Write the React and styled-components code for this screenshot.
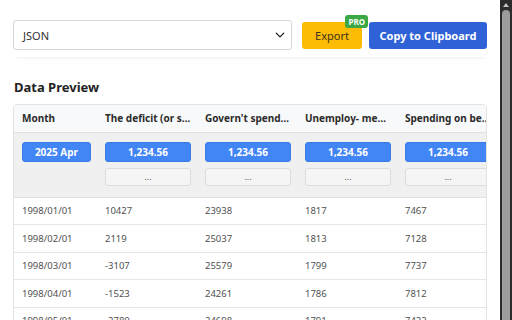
import React from 'react';
import styled, { createGlobalStyle } from 'styled-components';

const GlobalStyle = createGlobalStyle`
  html, body {
    margin: 0;
    padding: 0;
    background: #ffffff;
  }
  body {
    font-family: "Noto Sans", "Open Sans", Arial, sans-serif;
    color: #333;
  }
`;

const Page = styled.div`
  width: 512px;
  height: 320px;
  display: flex;
  overflow: hidden;
`;

const Main = styled.div`
  flex: 1;
  min-width: 0;
  padding: 13px 13px 0 13px;
  overflow: hidden;
`;

// fake window scrollbar on the right edge
const ScrollTrack = styled.div`
  width: 12px;
  flex-shrink: 0;
  background: #2c2c2c;
  display: flex;
  flex-direction: column;
  align-items: center;
  padding-top: 3px;
  box-sizing: border-box;
`;

const ScrollArrow = styled.div`
  width: 0;
  height: 0;
  border-left: 3.5px solid transparent;
  border-right: 3.5px solid transparent;
  border-bottom: 4px solid #c4c4c4;
`;

const ScrollThumb = styled.div`
  flex: 1;
  width: 8px;
  margin-top: 3px;
  background: #9c9c9c;
  border-radius: 4px 4px 0 0;
`;

const Toolbar = styled.div`
  display: flex;
  align-items: center;
  gap: 7px;
  padding: 7px 0 7px 0;
  box-shadow: 0 3px 3px -2px rgba(0, 0, 0, 0.07);
`;

const Select = styled.div`
  flex: 1;
  height: 30px;
  margin-right: 3px;
  box-sizing: border-box;
  border: 1px solid #d6d6d6;
  border-radius: 3px;
  display: flex;
  align-items: center;
  justify-content: space-between;
  padding: 0 6px 0 9px;
  font-size: 11px;
  color: #333;
`;

const ButtonWrap = styled.div`
  position: relative;
  display: flex;
`;

const Button = styled.button`
  height: 27px;
  border: none;
  border-radius: 3px;
  font-family: inherit;
  font-size: 11px;
  font-weight: ${p => (p.$primary ? 700 : 400)};
  color: ${p => (p.$primary ? '#ffffff' : '#3a3020')};
  background: ${p => (p.$primary ? '#2f62d6' : '#fcbb04')};
  padding: 0;
  width: ${p => p.$w}px;
  white-space: nowrap;
  cursor: pointer;
`;

const Badge = styled.span`
  position: absolute;
  top: -7px;
  right: -6px;
  background: #3aa845;
  color: #fff;
  font-size: 8px;
  font-weight: 700;
  line-height: 13px;
  padding: 0 3px;
  border-radius: 3px;
`;

const Heading = styled.h3`
  margin: 21px 0 0 1px;
  font-size: 13px;
  font-weight: 700;
  color: #222;
  line-height: 18px;
`;

const Card = styled.div`
  margin-top: 8px;
  border: 1px solid #e3e3e3;
  border-radius: 4px;
  overflow: hidden;
`;

const Table = styled.table`
  border-collapse: collapse;
  table-layout: fixed;
  width: 483px;
`;

const HeadCell = styled.th`
  width: ${p => p.$w}px;
  text-align: left;
  font-size: 10px;
  font-weight: 700;
  color: #2b2b2b;
  background: #f8f9fa;
  height: 27px;
  padding: 0 6px 0 8px;
  box-sizing: border-box;
  white-space: nowrap;
  overflow: hidden;
  text-overflow: ellipsis;
  border-bottom: 1px solid #e2e2e2;
`;

const FilterCell = styled.td`
  background: #f0f0f0;
  padding: 9px 6px 11px 8px;
  vertical-align: top;
  border-bottom: 1px solid #e2e2e2;
`;

const Stack = styled.div`
  display: flex;
  flex-direction: column;
  gap: 6px;
`;

const Pill = styled.div`
  height: 20px;
  box-sizing: border-box;
  background: #4285f4;
  border: 1px solid #3a7be6;
  border-radius: 3px;
  color: #fff;
  font-size: 10px;
  font-weight: 700;
  display: flex;
  align-items: center;
  justify-content: center;
  white-space: nowrap;
`;

const More = styled.div`
  height: 18px;
  box-sizing: border-box;
  background: #f5f5f5;
  border: 1px solid #dcdcdc;
  border-radius: 3px;
  color: #555;
  font-size: 9px;
  display: flex;
  align-items: center;
  justify-content: center;
`;

const Cell = styled.td`
  height: 27.5px;
  box-sizing: border-box;
  padding: 0 8px;
  font-size: 9.5px;
  color: #505050;
  border-bottom: 1px solid #e6e6e6;
  white-space: nowrap;
`;

const Chevron = () => (
  <svg width="10" height="10" viewBox="0 0 16 16">
    <path d="M2 5l6 6 6-6" fill="none" stroke="#222" strokeWidth="2.2" strokeLinecap="round" strokeLinejoin="round" />
  </svg>
);

const columns = [
  { label: 'Month', w: 83, value: '2025 Apr', more: false },
  { label: 'The deficit (or surplus)', w: 100, value: '1,234.56', more: true },
  { label: "Govern't spending", w: 100, value: '1,234.56', more: true },
  { label: 'Unemploy- ment rate', w: 100, value: '1,234.56', more: true },
  { label: 'Spending on benefits', w: 100, value: '1,234.56', more: true },
];

const rows = [
  ['1998/01/01', '10427', '23938', '1817', '7467'],
  ['1998/02/01', '2119', '25037', '1813', '7128'],
  ['1998/03/01', '-3107', '25579', '1799', '7737'],
  ['1998/04/01', '-1523', '24261', '1786', '7812'],
  ['1998/05/01', '-2780', '24698', '1791', '7422'],
];

const App = () => {
  return (
    <>
      <GlobalStyle />
      <Page>
        <Main>
          <Toolbar>
            <Select>
              <span>JSON</span>
              <Chevron />
            </Select>
            <ButtonWrap>
              <Button $w={60}>Export</Button>
              <Badge>PRO</Badge>
            </ButtonWrap>
            <Button $primary $w={118}>Copy to Clipboard</Button>
          </Toolbar>

          <Heading>Data Preview</Heading>

          <Card>
            <Table>
              <thead>
                <tr>
                  {columns.map(c => (
                    <HeadCell key={c.label} $w={c.w}>{c.label}</HeadCell>
                  ))}
                </tr>
              </thead>
              <tbody>
                <tr>
                  {columns.map(c => (
                    <FilterCell key={c.label}>
                      <Stack>
                        <Pill>{c.value}</Pill>
                        {c.more && <More>...</More>}
                      </Stack>
                    </FilterCell>
                  ))}
                </tr>
                {rows.map(r => (
                  <tr key={r[0]}>
                    {r.map((v, i) => (
                      <Cell key={i}>{v}</Cell>
                    ))}
                  </tr>
                ))}
              </tbody>
            </Table>
          </Card>
        </Main>
        <ScrollTrack>
          <ScrollArrow />
          <ScrollThumb />
        </ScrollTrack>
      </Page>
    </>
  );
};

export default App;
